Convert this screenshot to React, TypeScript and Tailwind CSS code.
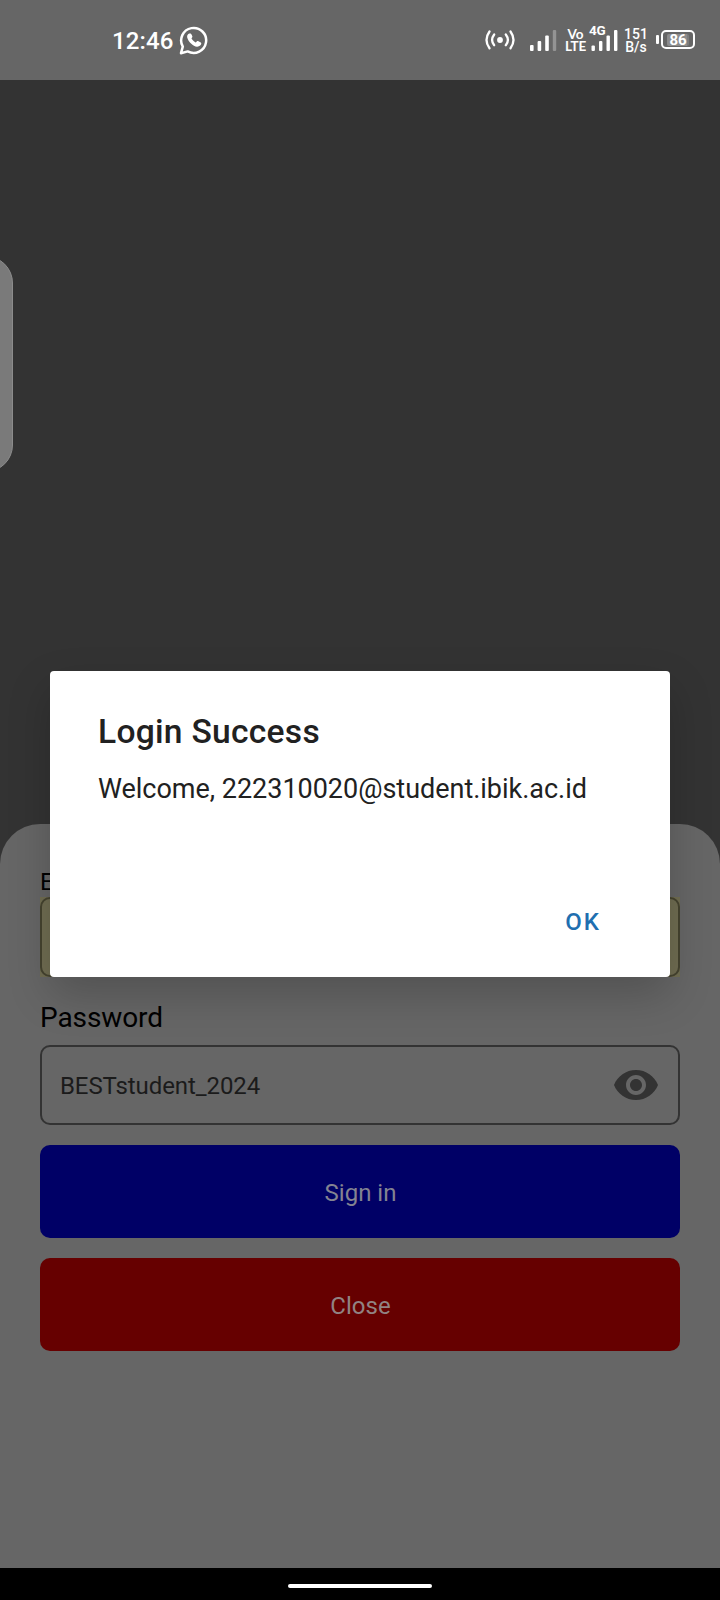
import React from "react";

function StatusBar() {
  return (
    <header className="flex h-20 items-start bg-[#666666] text-white">
      <span className="ml-[112px] mt-[27px] w-[67px] text-[24px] font-medium leading-[28px] tracking-[0.1px]">12:46</span>
      <svg className="mt-[25px] h-[30px] w-[30px]" viewBox="179 25 30 30" fill="none">
        <path d="M181 53.2 L182.8 46.6 A12.5 12.5 0 1 1 187.7 51.4 Z" stroke="#fff" strokeWidth="2.5" strokeLinejoin="round" />
        <path d="M189.3 33.4 C187.8 34 186.8 35.3 187.2 37.5 C188.2 41.7 193.2 46.4 197 46.7 C199.6 46.8 201.3 45.2 201.3 43.1 C201.3 42.6 198 40.8 197.4 41 C196.8 41.3 196.2 42.5 195.6 42.5 C194.5 42.2 192 39.8 191.5 38.6 C191.6 38 192.6 37.3 192.4 36.6 C192.2 35.6 191.3 33.6 190.6 33.4 Z" fill="#fff" />
      </svg>
      <svg className="ml-[276px] mt-[24px] h-[32px] w-[72px]" viewBox="485 24 72 32" fill="none">
        <g stroke="#fff" strokeWidth="2.3" strokeLinecap="round">
          <path d="M489.5 31.5 Q483.5 40 489.5 48.2" />
          <path d="M494.2 34.5 Q490 40 494.2 45.2" />
          <path d="M505.8 34.5 Q510 40 505.8 45.2" />
          <path d="M510.5 31.5 Q516.5 40 510.5 48.2" />
        </g>
        <circle cx="500" cy="40" r="2.9" fill="#fff" />
        <g fill="#fff">
          <rect x="530" y="45" width="3.6" height="6" rx="1" />
          <rect x="537.6" y="41" width="3.6" height="10" rx="1" />
          <rect x="545.2" y="35.5" width="3.6" height="15.5" rx="1" />
          <rect x="552.8" y="30" width="3.4" height="21" rx="1" opacity=".3" />
        </g>
      </svg>
      <div className="ml-[8px] mt-[28px] flex w-[21px] flex-col items-center font-['Lato',sans-serif] font-bold">
        <span className="text-[13.5px] leading-[12px]">Vo</span>
        <span className="text-[13.5px] leading-[12px] -tracking-[0.2px]">LTE</span>
      </div>
      <div className="ml-[3px] mt-[23px] w-[30px]">
        <div className="h-[12px] text-[13.5px] font-bold leading-[14px] -tracking-[0.3px]">4G</div>
        <svg className="-mt-[5px] h-[22px] w-[30px]" viewBox="590 30 30 22" fill="#fff">
          <rect x="592.5" y="45.5" width="3.4" height="5.5" rx="1" />
          <rect x="600" y="41" width="3.4" height="10" rx="1" />
          <rect x="607.5" y="35.5" width="3.4" height="15.5" rx="1" />
          <rect x="615" y="30" width="3.4" height="21" rx="1" />
        </svg>
      </div>
      <div className="ml-[5px] mt-[28px] flex w-[24px] flex-col items-center text-[14px] font-medium leading-[13px]">
        <span>151</span>
        <span>B/s</span>
      </div>
      <span className="ml-[8px] mt-[35px] h-[9px] w-[3px] rounded-[1px] bg-white" />
      <div className="ml-[2px] mt-[30px] flex h-[19px] w-[34px] items-center rounded-[5px] border-2 border-white px-[4px]">
        <div className="flex h-[12px] w-full items-center justify-center rounded-[2px] bg-linear-to-r from-[#8c8c8c] from-90% to-[#7c7c7c] to-90% text-[15px] font-bold leading-[14px]">86</div>
      </div>
    </header>
  );
}

function LoginSheet() {
  return (
    <main className="flex h-[744px] flex-col rounded-t-[40px] bg-[#666666] px-10 pt-[44px]">
      <label className="h-[29px] text-[24px] leading-[28px] text-black">Email</label>
      <div className="h-20 bg-[#706d52]">
        <div className="h-full rounded-[10px] border-2 border-[#45432f]" />
      </div>
      <label className="mt-[25px] text-[28px] leading-[32px] -tracking-[0.1px] text-black">Password</label>
      <div className="mt-[11px] flex h-20 items-center justify-between rounded-[10px] border-2 border-[#333333] px-[18px]">
        <span className="pt-[2px] text-[24px] leading-[28px] -tracking-[0.08px] text-[#1b1b1b]">BESTstudent_2024</span>
        <svg className="h-[48px] w-[48px]" viewBox="0 0 24 24" fill="#333333">
          <path d="M12 4.5C7 4.5 2.73 7.61 1 12c1.73 4.39 6 7.5 11 7.5s9.27-3.11 11-7.5c-1.73-4.39-6-7.5-11-7.5zM12 17c-2.76 0-5-2.24-5-5s2.24-5 5-5 5 2.24 5 5-2.24 5-5 5zm0-8c-1.66 0-3 1.34-3 3s1.34 3 3 3 3-1.34 3-3-1.34-3-3-3z" />
        </svg>
      </div>
      <button className="mt-5 h-[93px] shrink-0 rounded-[10px] bg-[#000066] pl-px pt-[2px] text-[24px] leading-[28px] text-[#838391]">Sign in</button>
      <button className="mt-5 h-[93px] shrink-0 rounded-[10px] bg-[#660000] pl-px pt-[2px] text-[24px] leading-[28px] text-[#918383]">Close</button>
    </main>
  );
}

function Dialog() {
  return (
    <section className="absolute left-[50px] top-[671px] flex h-[306px] w-[620px] flex-col rounded-[4px] bg-white pl-[48px] pr-[69px] pt-[41px] shadow-[0_18px_44px_rgba(0,0,0,0.2)]">
      <h1 className="text-[33.6px] font-medium leading-[40px] tracking-[0.27px] text-[#212121]">Login Success</h1>
      <p className="mt-[21px] whitespace-nowrap text-[27px] leading-[32px] -tracking-[0.02px] text-[#212121]">Welcome, 222310020@student.ibik.ac.id</p>
      <button className="mt-[103px] self-end text-[24px] font-medium leading-[28px] tracking-[2px] text-[#1f6fb0]">OK</button>
    </section>
  );
}

export default function App() {
  return (
    <div className="relative h-[1600px] w-[720px] overflow-hidden bg-[#333333] font-['Roboto',sans-serif]">
      <StatusBar />
      <div className="h-[744px]" />
      <LoginSheet />
      <footer className="flex h-8 justify-center bg-black pt-4">
        <div className="h-1 w-36 rounded-full bg-white" />
      </footer>
      <div className="absolute -left-[41px] top-[256px] h-[216px] w-[54px] rounded-[32px] border border-[#8c8c8c] bg-[#7a7a7a]" />
      <Dialog />
    </div>
  );
}
